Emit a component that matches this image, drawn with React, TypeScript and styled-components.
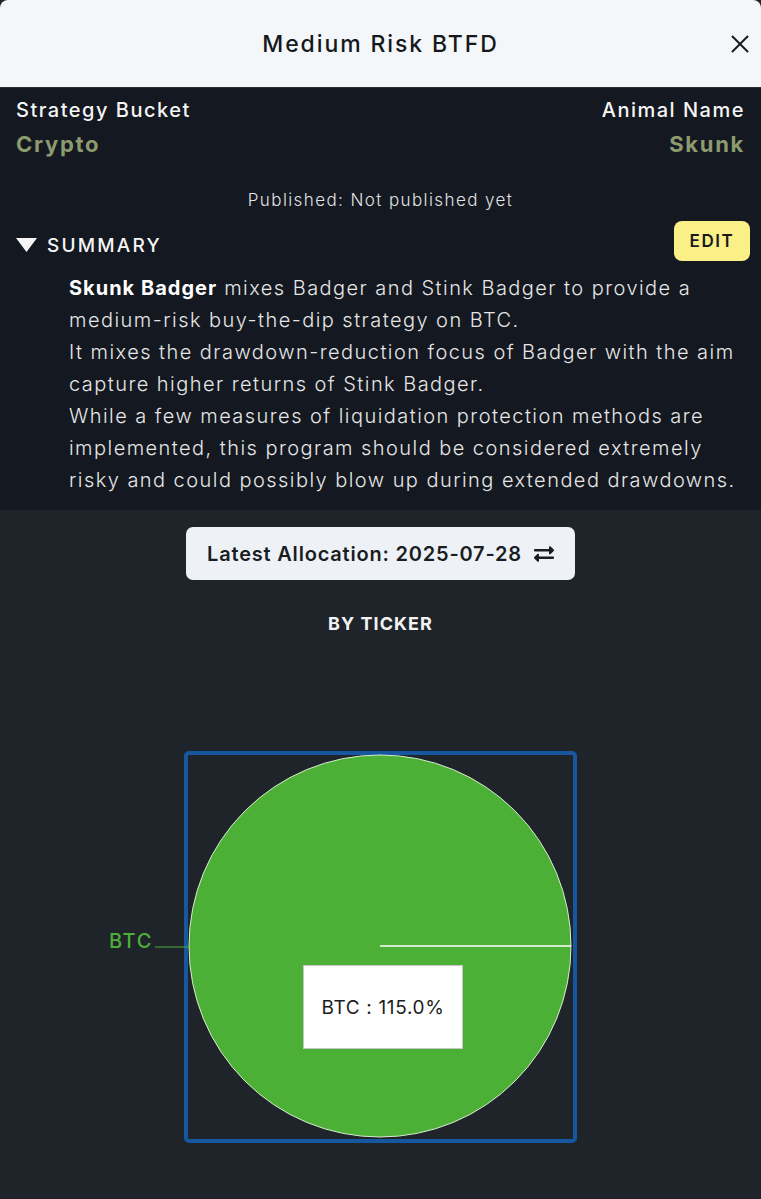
import React from 'react';
import styled, { createGlobalStyle } from 'styled-components';
import { X } from 'lucide-react';
import { FaExchangeAlt } from 'react-icons/fa';

const FONT = "Inter, 'Noto Sans', sans-serif";

const GlobalStyle = createGlobalStyle`
  html, body {
    margin: 0;
    padding: 0;
    background: #1f232a;
  }
  * {
    box-sizing: border-box;
  }
  body {
    font-family: ${FONT};
  }
`;

const Modal = styled.div`
  width: 761px;
  min-height: 1199px;
  background: #1f232a;
  display: flex;
  flex-direction: column;
`;

const Header = styled.header`
  height: 88px;
  background: #f4f7fa;
  border-radius: 8px 8px 0 0;
  display: grid;
  grid-template-columns: 1fr auto 1fr;
  align-items: center;
  border-bottom: 1px solid #2a2f36;
`;

const Title = styled.h1`
  grid-column: 2;
  margin: 0;
  font-size: 23px;
  font-weight: 500;
  letter-spacing: 1.9px;
  color: #15181c;
`;

const CloseButton = styled.button`
  justify-self: end;
  margin-right: 6px;
  background: none;
  border: none;
  padding: 0;
  display: flex;
  color: #1a1a1a;
  cursor: pointer;
`;

const InfoSection = styled.section`
  background: #141820;
  padding: 8px 16px 14px 16px;
  color: #fff;
`;

const MetaRow = styled.div`
  display: flex;
  justify-content: space-between;
`;

const MetaCol = styled.div<{ $align: 'left' | 'right' }>`
  display: flex;
  flex-direction: column;
  align-items: ${p => (p.$align === 'left' ? 'flex-start' : 'flex-end')};
`;

const MetaLabel = styled.span`
  font-size: 20px;
  font-weight: 500;
  line-height: 28px;
  letter-spacing: 1.5px;
  color: #f5f5f5;
`;

const MetaValue = styled.span`
  font-size: 22px;
  font-weight: 700;
  line-height: 34px;
  margin-top: 3px;
  letter-spacing: 1.7px;
  color: #8c9b6e;
`;

const Published = styled.p`
  margin: 27px 0 0;
  text-align: center;
  font-size: 17px;
  font-weight: 300;
  line-height: 24px;
  letter-spacing: 1.4px;
  color: #e2e2e2;
`;

const SummaryHead = styled.div`
  display: flex;
  align-items: center;
  justify-content: space-between;
  margin-top: 9px;
  margin-right: -5px;
`;

const SummaryToggle = styled.div`
  display: flex;
  align-items: center;
  gap: 10px;
  padding-top: 8px;
  font-size: 19px;
  font-weight: 500;
  letter-spacing: 2.2px;
  color: #f5f5f5;
`;

const EditButton = styled.button`
  width: 76px;
  height: 40px;
  border: none;
  border-radius: 8px;
  background: #fbef88;
  color: #1a1a1a;
  font-family: inherit;
  font-size: 17px;
  font-weight: 600;
  letter-spacing: 1.6px;
  cursor: pointer;
`;

const SummaryBody = styled.div`
  padding-left: 53px;
  margin-top: 11px;
  font-size: 20px;
  font-weight: 300;
  line-height: 32px;
  letter-spacing: 1.45px;
  color: #e6e6e6;

  p {
    margin: 0;
  }

  b {
    font-weight: 700;
    letter-spacing: 1px;
    color: #fff;
  }
`;

const AllocationSection = styled.section`
  display: flex;
  flex-direction: column;
  align-items: center;
  padding-top: 17px;
`;

const AllocationButton = styled.button`
  width: 389px;
  height: 53px;
  border: none;
  border-radius: 7px;
  background: #eef1f6;
  color: #1a1d22;
  font-family: inherit;
  font-size: 20px;
  font-weight: 600;
  letter-spacing: 0.8px;
  display: flex;
  align-items: center;
  justify-content: center;
  gap: 12px;
  cursor: pointer;
`;

const SectionTitle = styled.h2`
  margin: 32px 0 0;
  font-size: 18px;
  font-weight: 700;
  line-height: 24px;
  letter-spacing: 1.05px;
  color: #f2f2f2;
`;

const ChartWrap = styled.div`
  position: relative;
  width: 761px;
  height: 527px;
  margin-top: 35px;
`;

const Tooltip = styled.div`
  position: absolute;
  left: 303px;
  top: 294px;
  width: 160px;
  height: 84px;
  background: #fff;
  border: 1px solid #c6c6c6;
  display: flex;
  align-items: center;
  justify-content: center;
  font-size: 19px;
  font-weight: 400;
  letter-spacing: 0.65px;
  color: #1d1d1d;
`;

const GREEN = '#4caf36';

function PieChart() {
  // coordinates are relative to the top of ChartWrap
  const cx = 380;
  const cy = 275;
  const r = 191;
  return (
    <ChartWrap>
      <svg width="761" height="527" viewBox="0 0 761 527">
        <rect x="186" y="82" width="389" height="388" rx="3" fill="none" stroke="#1657a0" strokeWidth="4" />
        <circle cx={cx} cy={cy} r={r} fill={GREEN} stroke="#d8ecd0" strokeWidth="1" />
        <line x1={cx} y1={cy} x2={cx + r} y2={cy} stroke="#ffffff" strokeWidth="1.5" />
        <line x1="155" y1={cy + 1} x2={cx - r} y2={cy + 1} stroke={GREEN} strokeWidth="1" />
        <text x="109" y={cy + 2} fill={GREEN} fontSize="20" fontWeight="500" letterSpacing="1.6" fontFamily={FONT}>
          BTC
        </text>
      </svg>
      <Tooltip>BTC : 115.0%</Tooltip>
    </ChartWrap>
  );
}

export default function App() {
  return (
    <>
      <GlobalStyle />
      <Modal>
        <Header>
          <Title>Medium Risk BTFD</Title>
          <CloseButton aria-label="close">
            <X size={30} strokeWidth={1.6} />
          </CloseButton>
        </Header>

        <InfoSection>
          <MetaRow>
            <MetaCol $align="left">
              <MetaLabel>Strategy Bucket</MetaLabel>
              <MetaValue>Crypto</MetaValue>
            </MetaCol>
            <MetaCol $align="right">
              <MetaLabel>Animal Name</MetaLabel>
              <MetaValue>Skunk</MetaValue>
            </MetaCol>
          </MetaRow>

          <Published>Published: Not published yet</Published>

          <SummaryHead>
            <SummaryToggle>
              <svg width="21" height="14" viewBox="0 0 21 14">
                <polygon points="0,0 21,0 10.5,14" fill="#f5f5f5" />
              </svg>
              SUMMARY
            </SummaryToggle>
            <EditButton>EDIT</EditButton>
          </SummaryHead>

          <SummaryBody>
            <p>
              <b>Skunk Badger</b> mixes Badger and Stink Badger to provide a medium-risk buy-the-dip strategy on
              BTC.
            </p>
            <p>It mixes the drawdown-reduction focus of Badger with the aim capture higher returns of Stink Badger.</p>
            <p>
              While a few measures of liquidation protection methods are implemented, this program should be
              considered extremely risky and could possibly blow up during extended drawdowns.
            </p>
          </SummaryBody>
        </InfoSection>

        <AllocationSection>
          <AllocationButton>
            Latest Allocation: 2025-07-28
            <FaExchangeAlt size={20} />
          </AllocationButton>
          <SectionTitle>BY TICKER</SectionTitle>
          <PieChart />
        </AllocationSection>
      </Modal>
    </>
  );
}
